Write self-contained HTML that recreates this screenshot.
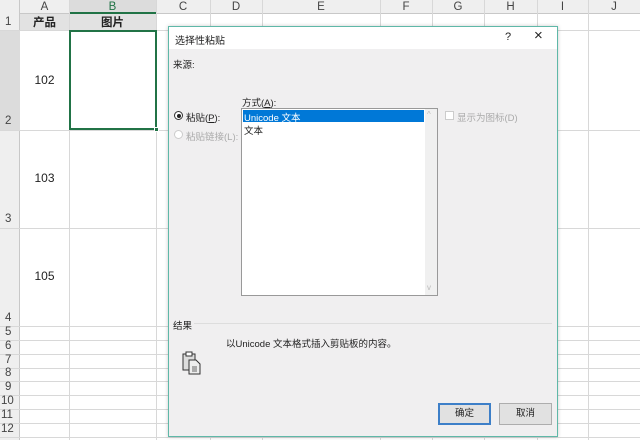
<!DOCTYPE html>
<html><head><meta charset="utf-8"><style>
*{margin:0;padding:0;box-sizing:border-box}
body{width:640px;height:440px;overflow:hidden;background:#fff;position:relative;font-family:"Liberation Sans","Noto Sans CJK SC",sans-serif;font-size:9.5px;color:#222}
.a{position:absolute}
.vl{position:absolute;top:0;height:440px;width:1px;background:#d8d8d8}
.hl{position:absolute;left:0;width:640px;height:1px;background:#d8d8d8}
.ch{position:absolute;top:0;height:14px;text-align:center;color:#444;font-size:11.5px;line-height:15px}
.rh{position:absolute;left:0;width:20px;text-align:left;padding-left:5px;color:#444;font-size:11.5px}
</style></head><body>
<div class="a" style="left:0;top:0;width:640px;height:14px;background:#efefef;border-bottom:1px solid #c8c8c8"></div>
<div class="a" style="left:0;top:0;width:20px;height:440px;background:#efefef;border-right:1px solid #c8c8c8"></div>
<div class="a" style="left:69px;top:0;width:87px;height:14px;background:#dcdcdc;border-bottom:2px solid #217346"></div>
<div class="a" style="left:0;top:30px;width:20px;height:100px;background:#dcdcdc"></div>
<div class="a" style="left:20px;top:14px;width:136px;height:16px;background:#e2e2e2"></div>
<div class="vl" style="left:69px"></div><div class="vl" style="left:156px"></div><div class="vl" style="left:210px"></div><div class="vl" style="left:262px"></div><div class="vl" style="left:380px"></div><div class="vl" style="left:432px"></div><div class="vl" style="left:484px"></div><div class="vl" style="left:537px"></div><div class="vl" style="left:588px"></div>
<div class="hl" style="top:30px"></div><div class="hl" style="top:130px"></div><div class="hl" style="top:228px"></div><div class="hl" style="top:326px"></div><div class="hl" style="top:340px"></div><div class="hl" style="top:354px"></div><div class="hl" style="top:368px"></div><div class="hl" style="top:381px"></div><div class="hl" style="top:395px"></div><div class="hl" style="top:409px"></div><div class="hl" style="top:423px"></div><div class="hl" style="top:437px"></div>
<div class="ch" style="left:20px;width:49px">A</div><div class="ch" style="left:69px;width:87px;color:#217346">B</div><div class="ch" style="left:156px;width:54px">C</div><div class="ch" style="left:210px;width:52px">D</div><div class="ch" style="left:262px;width:118px">E</div><div class="ch" style="left:380px;width:52px">F</div><div class="ch" style="left:432px;width:52px">G</div><div class="ch" style="left:484px;width:53px">H</div><div class="ch" style="left:537px;width:51px">I</div><div class="ch" style="left:588px;width:52px">J</div>
<div class="rh" style="top:16px">1</div><div class="rh" style="top:115px">2</div><div class="rh" style="top:213px">3</div><div class="rh" style="top:312px">4</div><div class="rh" style="top:326px">5</div><div class="rh" style="top:340px">6</div><div class="rh" style="top:354px">7</div><div class="rh" style="top:367px">8</div><div class="rh" style="top:381px">9</div><div class="rh" style="top:395px;padding-left:1px">10</div><div class="rh" style="top:409px;padding-left:1px">11</div><div class="rh" style="top:423px;padding-left:1px">12</div>
<div class="a" style="left:20px;top:14px;width:49px;text-align:center;font-size:11.5px;font-weight:bold">产品</div>
<div class="a" style="left:69px;top:14px;width:87px;text-align:center;font-size:11.5px;font-weight:bold">图片</div>
<div class="a" style="left:20px;top:73px;width:49px;text-align:center;font-size:12px">102</div>
<div class="a" style="left:20px;top:171px;width:49px;text-align:center;font-size:12px">103</div>
<div class="a" style="left:20px;top:269px;width:49px;text-align:center;font-size:12px">105</div>
<div class="a" style="left:69px;top:30px;width:88px;height:100px;border:2px solid #217346;background:#fff"></div>
<div class="a" style="left:154px;top:127px;width:5px;height:5px;background:#217346;border:1px solid #fff"></div>
<!-- dialog -->
<div class="a" style="left:168px;top:26px;width:390px;height:411px;border:1px solid #5fb8a8;background:#f0eff0;box-shadow:0 0 4px rgba(0,0,0,.2)"></div>
<div class="a" style="left:169px;top:27px;width:388px;height:22px;background:#fff"></div>
<div class="a" style="left:175px;top:32px;font-size:10px">选择性粘贴</div>
<div class="a" style="left:505px;top:31px;font-size:11px">?</div>
<div class="a" style="left:534px;top:27px;font-size:15px;font-weight:300">×</div>
<div class="a" style="left:173px;top:57px">来源:</div>
<div class="a" style="left:242px;top:95px">方式(<u>A</u>):</div>
<div class="a" style="left:174px;top:111px;width:9px;height:9px;border:1px solid #333;border-radius:50%;background:#fff"><div style="margin:1.5px;width:4px;height:4px;border-radius:50%;background:#222"></div></div>
<div class="a" style="left:186px;top:110px">粘贴(<u>P</u>):</div>
<div class="a" style="left:174px;top:130px;width:9px;height:9px;border:1px solid #ccc;border-radius:50%;background:#fff"></div>
<div class="a" style="left:186px;top:129px;color:#aaa">粘贴链接(L):</div>
<div class="a" style="left:241px;top:108px;width:197px;height:188px;border:1px solid #999;background:#fff"></div>
<div class="a" style="left:425px;top:109px;width:12px;height:186px;background:#f0f0f0"></div>
<div class="a" style="left:427px;top:110px;color:#bbb;font-size:8px">^</div>
<div class="a" style="left:427px;top:283px;color:#bbb;font-size:8px">v</div>
<div class="a" style="left:243px;top:110px;width:181px;height:12px;background:#0078d7"></div>
<div class="a" style="left:244px;top:110px;color:#fff;font-size:9.5px">Unicode 文本</div>
<div class="a" style="left:244px;top:123px;font-size:9.5px">文本</div>
<div class="a" style="left:445px;top:111px;width:9px;height:9px;border:1px solid #ccc;background:#fff"></div>
<div class="a" style="left:457px;top:110px;color:#aaa">显示为图标(D)</div>
<div class="a" style="left:173px;top:318px">结果</div>
<div class="a" style="left:194px;top:323px;width:358px;height:1px;background:#ddd"></div>
<div class="a" style="left:226px;top:336px">以Unicode 文本格式插入剪贴板的内容。</div>
<svg class="a" style="left:182px;top:351px" width="22" height="24" viewBox="0 0 22 24"><rect x="1" y="3" width="12" height="16" fill="#ddd" stroke="#333"/><rect x="4" y="1" width="6" height="4" fill="#fff" stroke="#333"/><path d="M7 9h7l4 4v10H7z" fill="#eee" stroke="#333"/><rect x="10" y="15" width="5" height="6" fill="#aaa"/></svg>
<div class="a" style="left:438px;top:403px;width:53px;height:22px;border:2px solid #3d7fc8;background:#e1e1e1;text-align:center;line-height:18px">确定</div>
<div class="a" style="left:499px;top:403px;width:53px;height:22px;border:1px solid #adadad;background:#e1e1e1;text-align:center;line-height:20px">取消</div>
</body></html>
